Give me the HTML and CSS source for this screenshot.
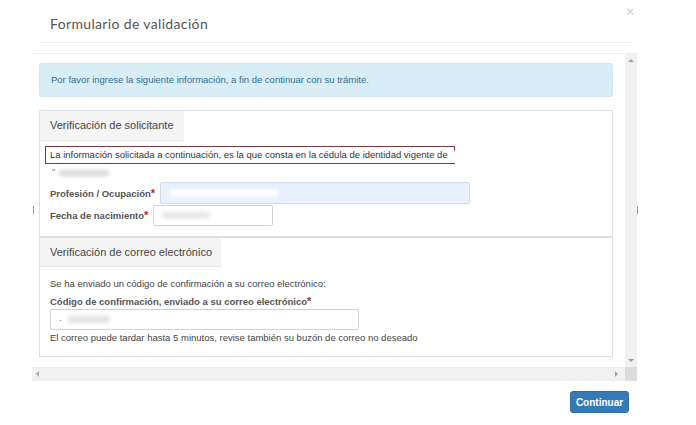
FILE: index.html
```html
<!DOCTYPE html>
<html lang="es">
<head>
<meta charset="utf-8">
<title>Formulario de validación</title>
<link rel="stylesheet" href="styles.css">
</head>
<body>
<div class="modal">
  <div class="modal-header">
    <h4 class="modal-title">Formulario de validación</h4>
    <span class="close">×</span>
  </div>
  <div class="scroll-area">
    <div class="scroll-content">
      <div class="alert">Por favor ingrese la siguiente información, a fin de continuar con su trámite.</div>

      <div class="panel">
        <div class="panel-tab tab-1">Verificación de solicitante</div>
        <div class="panel-body body-1">
          <div class="notice">La información solicitada a continuación, es la que consta en la cédula de identidad vigente de</div>
          <div class="redacted-row"><span class="quote">"</span><span class="blur blur-name"></span></div>
          <div class="form-row">
            <label class="label">Profesión / Ocupación<span class="req">*</span></label>
            <div class="input input-autofill input-prof"><span class="blur blur-white"></span></div>
          </div>
          <div class="form-row">
            <label class="label">Fecha de nacimiento<span class="req">*</span></label>
            <div class="input input-date"><span class="blur blur-date"></span></div>
          </div>
        </div>
      </div>

      <div class="panel panel-2">
        <div class="panel-tab tab-2">Verificación de correo electrónico</div>
        <div class="panel-body body-2">
          <p class="text">Se ha enviado un código de confirmación a su correo electrónico:</p>
          <label class="label label-block">Código de confirmación, enviado a su correo electrónico<span class="req">*</span></label>
          <div class="input input-code"><span class="dot">.</span><span class="blur blur-code"></span></div>
          <p class="help">El correo puede tardar hasta 5 minutos, revise también su buzón de correo no deseado</p>
        </div>
      </div>
    </div>
    <div class="vscroll">
      <span class="arrow arrow-up"></span>
      <span class="arrow arrow-down"></span>
    </div>
    <div class="hscroll">
      <span class="arrow arrow-left"></span>
      <span class="arrow arrow-right"></span>
    </div>
    <div class="corner"></div>
    <span class="tick tick-left"></span>
    <span class="tick tick-right"></span>
  </div>
  <div class="modal-footer">
    <button class="btn-primary" type="button">Continuar</button>
  </div>
</div>
</body>
</html>
```

FILE: styles.css
```css
* { box-sizing: border-box; }

html, body {
  margin: 0;
  padding: 0;
  background: #fff;
}

body {
  font-family: "Liberation Sans", Arial, sans-serif;
  color: #333;
  width: 696px;
  height: 425px;
  overflow: hidden;
}

.modal {
  position: relative;
  width: 696px;
  height: 425px;
}

.modal-header {
  position: relative;
  height: 43px;
  margin: 0 65px 0 40px;
  padding-left: 10px;
  border-bottom: 1px solid #ececec;
  display: flex;
  align-items: center;
}

.modal-title {
  margin: 0;
  font-family: Lato, "Open Sans", sans-serif;
  font-weight: 400;
  font-size: 14px;
  letter-spacing: 0.35px;
  color: #555;
  padding-top: 5px;
}

.close {
  position: absolute;
  right: -4px;
  top: 5px;
  font-family: "DejaVu Sans", sans-serif;
  font-size: 11px;
  color: #c8c8c8;
}

.scroll-area {
  position: relative;
  margin: 10px 0 0 32px;
  width: 605px;
  height: 328px;
  border-top: 1px solid #efefef;
  display: grid;
  grid-template-columns: 593px 12px;
  grid-template-rows: 313px 14px;
}

.scroll-content {
  padding: 9px 12px 0 7px;
  overflow: hidden;
}

.alert {
  height: 34px;
  background: #d9edf7;
  border: 1px solid #cfe7f2;
  border-radius: 3px;
  padding: 0 11px;
  font-size: 9.5px;
  line-height: 32px;
  color: #31708f;
}

.panel {
  margin-top: 13px;
  border: 1px solid #dedede;
}

.panel-2 {
  margin-top: 0;
  border-top: 1px solid #dedede;
}

.panel-tab {
  height: 30px;
  background: #f5f5f5;
  border-bottom: 1px solid #e6e6e6;
  padding-left: 10px;
  font-size: 11px;
  line-height: 29px;
  color: #444;
}

.tab-1 { width: 144px; }
.tab-2 { width: 181px; height: 29px; line-height: 28px; }

.panel-body {
  padding-left: 10px;
}

.body-1 {
  padding-top: 5px;
  height: 95px;
}

.notice {
  position: relative;
  margin-left: -5px;
  width: 410px;
  height: 18px;
  border-top: 1px solid #7d3b3f;
  border-left: 1px solid #7d3b3f;
  border-bottom: 1px solid #7d3b3f;
  padding-left: 4px;
  font-size: 9.5px;
  line-height: 16px;
  color: #333;
  white-space: nowrap;
  overflow: hidden;
}

.notice::after {
  content: "";
  position: absolute;
  right: 0;
  top: 0;
  width: 1px;
  height: 4px;
  background: #7d3b3f;
}

.redacted-row {
  height: 15px;
  display: flex;
  align-items: center;
  gap: 4px;
  padding-left: 2px;
}

.quote {
  font-size: 9px;
  color: #777;
  line-height: 9px;
  margin-top: 1px;
}

.blur {
  display: inline-block;
  border-radius: 6px;
  filter: blur(2px);
}

.blur-name {
  width: 50px;
  height: 6px;
  background: #d6d6d6;
  margin-top: 2px;
}

.form-row {
  display: flex;
  align-items: center;
  height: 22px;
}

.body-1 .redacted-row + .form-row { margin-top: 3px; }

.label {
  font-size: 9.5px;
  font-weight: 700;
  color: #555;
  white-space: nowrap;
}

.req {
  color: #b0272f;
  font-size: 11px;
}

.input {
  height: 22px;
  border: 1px solid #d2d2d2;
  border-radius: 2px;
  background: #fff;
  display: flex;
  align-items: center;
  padding-left: 8px;
}

.input-autofill {
  background: #e8f0fe;
  border-color: #d3dbe6;
}

.input-prof {
  width: 310px;
  margin-left: 5px;
}

.input-date {
  width: 120px;
  height: 21px;
  margin-left: 5px;
}

.blur-white {
  width: 110px;
  height: 8px;
  background: #fff;
}

.blur-date {
  width: 48px;
  height: 6px;
  background: #e3e3e3;
}

.body-2 {
  padding-top: 10px;
  height: 89px;
}

.text {
  margin: 0;
  font-size: 9.5px;
  line-height: 14px;
  color: #444;
}

.label-block {
  display: block;
  margin-top: 3px;
  line-height: 14px;
}

.input-code {
  width: 309px;
  height: 21px;
  margin-top: 0;
}

.dot {
  font-size: 10px;
  color: #777;
  margin-right: 6px;
  line-height: 10px;
  margin-top: -4px;
}

.blur-code {
  width: 42px;
  height: 7px;
  background: #e2e2e2;
}

.help {
  margin: 0;
  font-size: 9.5px;
  line-height: 15px;
  color: #444;
}

.vscroll {
  position: relative;
  grid-column: 2;
  grid-row: 1;
  background: #f1f1f1;
}

.hscroll {
  position: relative;
  grid-column: 1;
  grid-row: 2;
  background: #f1f1f1;
}

.corner {
  grid-column: 2;
  grid-row: 2;
  background: #dcdcdc;
}

.arrow {
  position: absolute;
  width: 0;
  height: 0;
}

.arrow-up {
  left: 3px;
  top: 5px;
  border-left: 3px solid transparent;
  border-right: 3px solid transparent;
  border-bottom: 3px solid #a3a3a3;
}

.arrow-down {
  left: 3px;
  bottom: 5px;
  border-left: 3px solid transparent;
  border-right: 3px solid transparent;
  border-top: 3px solid #a3a3a3;
}

.arrow-left {
  left: 4px;
  top: 4px;
  border-top: 3px solid transparent;
  border-bottom: 3px solid transparent;
  border-right: 3px solid #a3a3a3;
}

.arrow-right {
  right: 7px;
  top: 4px;
  border-top: 3px solid transparent;
  border-bottom: 3px solid transparent;
  border-left: 3px solid #a3a3a3;
}

.tick {
  position: absolute;
  width: 1px;
  height: 8px;
  top: 152px;
  background: #9a9a9a;
}

.tick-left { left: 1px; }
.tick-right { right: -1px; }

.modal-footer {
  display: flex;
  justify-content: flex-end;
  padding: 10px 67px 0 0;
}

.btn-primary {
  width: 59px;
  height: 22px;
  border: 1px solid #2e6da4;
  border-radius: 3px;
  background: #337ab7;
  color: #fff;
  font-family: "Liberation Sans", Arial, sans-serif;
  font-size: 10px;
  font-weight: 700;
  padding: 0;
  cursor: pointer;
}
```
